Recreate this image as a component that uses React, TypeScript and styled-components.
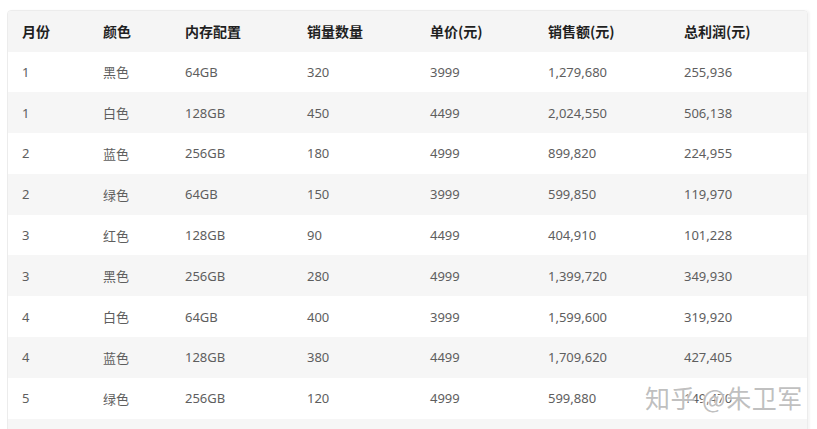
import React from "react";
import styled, { createGlobalStyle } from "styled-components";

const GlobalStyle = createGlobalStyle`
  html, body {
    margin: 0;
    padding: 0;
    background: #ffffff;
    overflow: hidden;
  }
  body {
    font-family: "Noto Sans", "Noto Sans CJK SC", sans-serif;
  }
`;

const Page = styled.div`
  position: relative;
  padding: 10px 9px 0 7px;
  height: 429px;
  box-sizing: border-box;
  overflow: hidden;
`;

const Card = styled.div`
  border: 1px solid #ececec;
  border-radius: 4px;
  overflow: hidden;
  box-shadow: 2px 0 2px rgba(0, 0, 0, 0.04);
`;

const Table = styled.table`
  width: 100%;
  border-collapse: collapse;
  table-layout: fixed;
`;

const HeadCell = styled.th<{ $w: number }>`
  box-sizing: border-box;
  width: ${(p) => p.$w}px;
  height: 40.5px;
  padding: 0 0 0 14px;
  text-align: left;
  font-family: "Noto Sans CJK SC", sans-serif;
  font-size: 14px;
  font-weight: 700;
  color: #1f1f1f;
  background: #f5f5f5;
`;

const Row = styled.tr<{ $alt: boolean }>`
  background: ${(p) => (p.$alt ? "#f6f6f6" : "#ffffff")};
`;

const Cell = styled.td`
  box-sizing: border-box;
  height: 40.8px;
  padding: 0 0 0 14px;
  font-family: "Noto Sans", "Noto Sans CJK SC", sans-serif;
  font-size: 13px;
  color: #5e5e5e;
  white-space: nowrap;
`;

const Watermark = styled.div`
  position: absolute;
  left: 645px;
  top: 379px;
  font-family: "Noto Sans CJK SC", sans-serif;
  font-size: 25px;
  font-weight: 400;
  letter-spacing: 0.5px;
  color: rgba(150, 150, 150, 0.62);
  text-shadow: 0 0 2px #fff, 0 0 2px #fff;
  pointer-events: none;
`;

const columns: [string, number][] = [
  ["月份", 81],
  ["颜色", 82],
  ["内存配置", 122],
  ["销量数量", 123],
  ["单价(元)", 118],
  ["销售额(元)", 136],
  ["总利润(元)", 137],
];

const rows: string[][] = [
  ["1", "黑色", "64GB", "320", "3999", "1,279,680", "255,936"],
  ["1", "白色", "128GB", "450", "4499", "2,024,550", "506,138"],
  ["2", "蓝色", "256GB", "180", "4999", "899,820", "224,955"],
  ["2", "绿色", "64GB", "150", "3999", "599,850", "119,970"],
  ["3", "红色", "128GB", "90", "4499", "404,910", "101,228"],
  ["3", "黑色", "256GB", "280", "4999", "1,399,720", "349,930"],
  ["4", "白色", "64GB", "400", "3999", "1,599,600", "319,920"],
  ["4", "蓝色", "128GB", "380", "4499", "1,709,620", "427,405"],
  ["5", "绿色", "256GB", "120", "4999", "599,880", "149,470"],
  ["5", "红色", "64GB", "200", "3999", "799,800", "159,960"],
];

export default function App() {
  return (
    <>
      <GlobalStyle />
      <Page>
        <Card>
          <Table>
            <thead>
              <tr>
                {columns.map(([name, w]) => (
                  <HeadCell key={name} $w={w}>
                    {name}
                  </HeadCell>
                ))}
              </tr>
            </thead>
            <tbody>
              {rows.map((r, i) => (
                <Row key={i} $alt={i % 2 === 1}>
                  {r.map((v, j) => (
                    <Cell key={j}>{v}</Cell>
                  ))}
                </Row>
              ))}
            </tbody>
          </Table>
        </Card>
        <Watermark>知乎 @朱卫军</Watermark>
      </Page>
    </>
  );
}
